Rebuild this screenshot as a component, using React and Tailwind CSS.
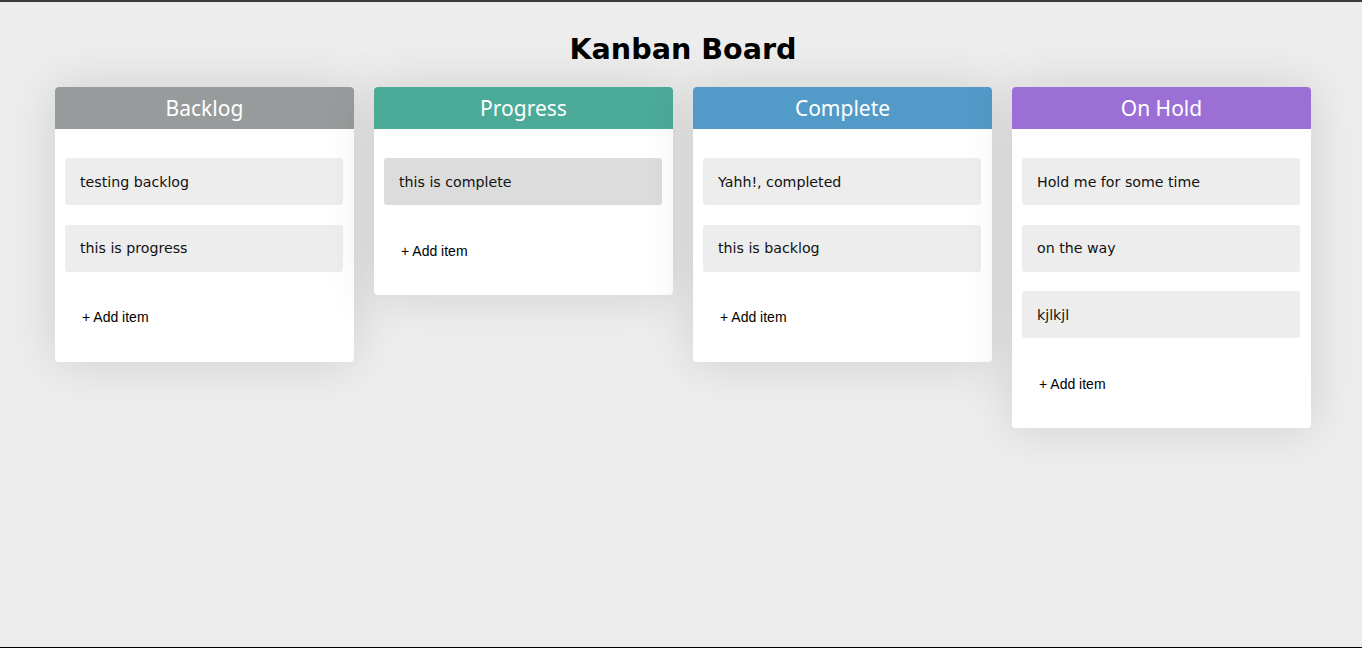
import React from "react";

const columns = [
  { title: "Backlog", color: "bg-[#989b9b]", items: ["testing backlog", "this is progress"] },
  { title: "Progress", color: "bg-[#4caa98]", items: ["this is complete"], active: 0 },
  { title: "Complete", color: "bg-[#529bc8]", items: ["Yahh!, completed", "this is backlog"] },
  { title: "On Hold", color: "bg-[#9c6fd6]", items: ["Hold me for some time", "on the way", "kjlkjl"] },
];

const Column = ({ col }) => (
  <div className="w-[299px] bg-white rounded-[4px] shadow-[0_0_50px_rgba(0,0,0,0.13)] self-start">
    <div
      className={`${col.color} h-[42px] pt-[2px] rounded-t-[4px] flex items-center justify-center text-white text-[21px] font-['Noto_Sans',sans-serif]`}
    >
      {col.title}
    </div>
    <div className="pt-[29px] pl-[10px] pb-[34px]">
      <div className="flex flex-col gap-[19.5px]">
        {col.items.map((item, i) => (
          <div
            key={item}
            className={`${col.active === i ? "bg-[#dcdcdc]" : "bg-[#ededed]"} w-[278px] h-[47px] pt-[2px] rounded-[3px] px-[15px] flex items-center text-[14.2px] text-[#111] font-['DejaVu_Sans',sans-serif]`}
          >
            {item}
          </div>
        ))}
      </div>
      <div className="mt-[36px] h-[20px] pl-[17px] flex items-center text-[14px] text-black font-['Liberation_Sans',sans-serif]">
        + Add item
      </div>
    </div>
  </div>
);

export default function App() {
  return (
    <div className="h-[648px] bg-[#ededed] border-t-2 border-t-[#3a3a3a] border-b border-b-black overflow-hidden">
      <h1 className="text-center pt-[30px] pl-[4px] text-[28.6px] leading-[34px] font-bold text-black font-['DejaVu_Sans',sans-serif]">
        Kanban Board
      </h1>
      <div className="flex gap-[20px] pl-[55px] mt-[21px]">
        {columns.map((col) => (
          <Column key={col.title} col={col} />
        ))}
      </div>
    </div>
  );
}
